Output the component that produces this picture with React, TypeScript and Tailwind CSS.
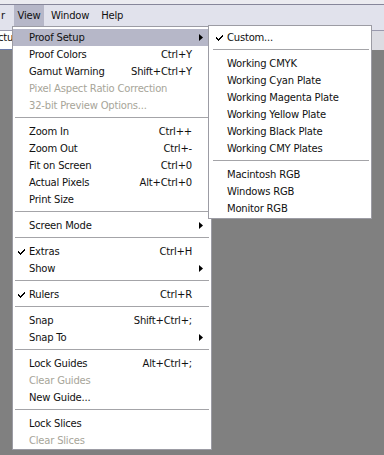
import React from 'react';

type Item =
  | { sep: true }
  | { sep?: false; label: string; key?: string; sub?: boolean; off?: boolean; check?: boolean; hl?: boolean };

const viewMenu: Item[] = [
  { label: 'Proof Setup', sub: true, hl: true },
  { label: 'Proof Colors', key: 'Ctrl+Y' },
  { label: 'Gamut Warning', key: 'Shift+Ctrl+Y' },
  { label: 'Pixel Aspect Ratio Correction', off: true },
  { label: '32-bit Preview Options...', off: true },
  { sep: true },
  { label: 'Zoom In', key: 'Ctrl++' },
  { label: 'Zoom Out', key: 'Ctrl+-' },
  { label: 'Fit on Screen', key: 'Ctrl+0' },
  { label: 'Actual Pixels', key: 'Alt+Ctrl+0' },
  { label: 'Print Size' },
  { sep: true },
  { label: 'Screen Mode', sub: true },
  { sep: true },
  { label: 'Extras', key: 'Ctrl+H', check: true },
  { label: 'Show', sub: true },
  { sep: true },
  { label: 'Rulers', key: 'Ctrl+R', check: true },
  { sep: true },
  { label: 'Snap', key: 'Shift+Ctrl+;' },
  { label: 'Snap To', sub: true },
  { sep: true },
  { label: 'Lock Guides', key: 'Alt+Ctrl+;' },
  { label: 'Clear Guides', off: true },
  { label: 'New Guide...' },
  { sep: true },
  { label: 'Lock Slices' },
  { label: 'Clear Slices', off: true },
];

const proofMenu: Item[] = [
  { label: 'Custom...', check: true },
  { sep: true },
  { label: 'Working CMYK' },
  { label: 'Working Cyan Plate' },
  { label: 'Working Magenta Plate' },
  { label: 'Working Yellow Plate' },
  { label: 'Working Black Plate' },
  { label: 'Working CMY Plates' },
  { sep: true },
  { label: 'Macintosh RGB' },
  { label: 'Windows RGB' },
  { label: 'Monitor RGB' },
];

function Check() {
  return (
    <svg width="7" height="7" viewBox="0 0 7 7" className="shrink-0">
      <path d="M0 3h1v1h1v1h1V4h1V3h1V2h1V1h1v2H6v1H5v1H4v1H3v1H2V6H1V5H0z" fill="#000" />
    </svg>
  );
}

function Arrow() {
  return (
    <svg width="4" height="7" viewBox="0 0 4 7" className="shrink-0">
      <path d="M0 0L4 3.5L0 7Z" fill="#000" />
    </svg>
  );
}

function MenuRows({ items }: { items: Item[] }) {
  return (
    <>
      {items.map((it, i) =>
        it.sep ? (
          <div key={i} className="h-[9px] mx-[2px] flex flex-col justify-start">
            <div className="mt-[3px] h-px bg-[#a4a4a8]" />
          </div>
        ) : (
          <div
            key={i}
            className={`h-[17px] flex items-center relative ${it.hl ? 'bg-[#b6b7c8]' : ''} ${it.off ? 'text-[#a7a599]' : 'text-[#111]'}`}
          >
            <div className="w-[16px] flex justify-center pl-[1px]">{it.check && <Check />}</div>
            <span className="flex-1 whitespace-nowrap">{it.label}</span>
            {it.key && <span className="whitespace-nowrap mr-[19px]">{it.key}</span>}
            {it.sub && (
              <span className="absolute right-[8px] top-[5px] flex">
                <Arrow />
              </span>
            )}
          </div>
        )
      )}
    </>
  );
}

export default function App() {
  return (
    <div
      className="relative w-[384px] h-[455px] overflow-hidden bg-[#808080] text-[10px] leading-none tracking-[-0.2px]"
      style={{ fontFamily: '"DejaVu Sans", Tahoma, sans-serif' }}
    >
      {/* title strip + menu bar */}
      <div className="h-[4px] bg-[#ebebf0]" />
      <div className="h-px bg-[#86869a]" />
      <div className="h-[21px] bg-[#e1e2ec] flex items-center text-[#111]">
        <span className="w-[14px] pl-[1px]">r</span>
        <span className="h-full flex items-center bg-[#b6b7c8] w-[30px] justify-center">View</span>
        <span className="ml-[7px]">Window</span>
        <span className="ml-[12px]">Help</span>
      </div>

      {/* toolbar strip */}
      <div className="h-[24px] bg-[#dcdce2] flex flex-col">
        <div className="h-[5px] bg-[#e1e2ec] border-b border-[#9a9aae]" />
        <div className="flex-1 bg-white w-[14px] border-b border-[#6a7aa8] text-[#111] pt-[2px] -ml-[2px] overflow-hidden">ctu</div>
      </div>

      {/* View menu */}
      <div className="absolute left-[12px] top-[26px] w-[200px] bg-white border border-[#9c9ca4] pt-[2px]">
        <MenuRows items={viewMenu} />
      </div>

      {/* Proof Setup submenu */}
      <div className="absolute left-[208px] top-[25px] w-[164px] bg-white border border-[#9c9ca4] pt-[3px] pb-[1px] pl-[2px]">
        <MenuRows items={proofMenu} />
      </div>
    </div>
  );
}
